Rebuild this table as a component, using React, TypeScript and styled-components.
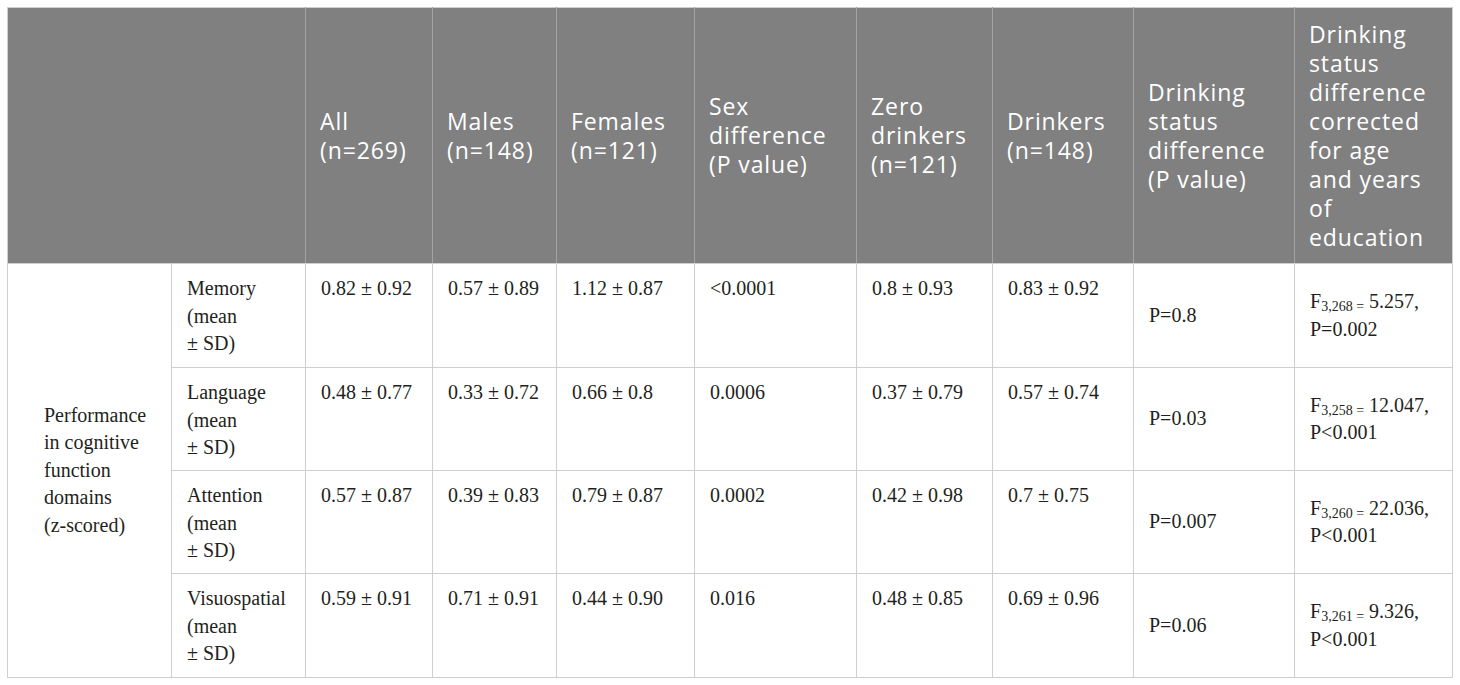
import styled, { createGlobalStyle } from "styled-components"

const GlobalStyle = createGlobalStyle`
    body {
        margin: 0;
        background: #ffffff;
    }
`

const Page = styled.div`
    padding: 7px 0 0 7px;
`

const Table = styled.table`
    border-collapse: collapse;
    table-layout: fixed;
    width: 1446px;
    border: 1px solid #cfcfcf;
`

const HeadRow = styled.tr`
    height: 256px;
    background: #808080;
`

const HeadCell = styled.th`
    font-family: "Open Sans", "DejaVu Sans", sans-serif;
    font-weight: 400;
    font-size: 23px;
    letter-spacing: 0.9px;
    line-height: 29px;
    color: #ffffff;
    text-align: left;
    vertical-align: middle;
    padding: 0 12px 0 14px;
    border-left: 1px solid #a3a3a3;
    border-bottom: 1px solid #cfcfcf;
    &:first-child {
        border-left: none;
    }
`

const BodyRow = styled.tr<{ $h: number }>`
    height: ${p => p.$h}px;
`

const Cell = styled.td<{ $middle?: boolean; $indent?: number }>`
    font-family: "Liberation Serif", "Times New Roman", serif;
    font-size: 20px;
    line-height: 27.5px;
    color: #231f20;
    text-align: left;
    vertical-align: ${p => (p.$middle ? "middle" : "top")};
    padding: ${p => (p.$middle ? "0" : "11px")} 14px 0 ${p => p.$indent ?? 15}px;
    border: 1px solid #cfcfcf;
`

const Sub = styled.sub`
    font-size: 14px;
    vertical-align: -3px;
    line-height: 0;
`

const widths = [164, 134, 127, 124, 138, 162, 136, 141, 161, 158]

const rows = [
    {
        name: "Memory",
        vals: ["0.82 ± 0.92", "0.57 ± 0.89", "1.12 ± 0.87", "<0.0001", "0.8 ± 0.93", "0.83 ± 0.92"],
        p: "P=0.8",
        f: ["3,268", "5.257", "P=0.002"],
        h: 104,
    },
    {
        name: "Language",
        vals: ["0.48 ± 0.77", "0.33 ± 0.72", "0.66 ± 0.8", "0.0006", "0.37 ± 0.79", "0.57 ± 0.74"],
        p: "P=0.03",
        f: ["3,258", "12.047", "P<0.001"],
        h: 103,
    },
    {
        name: "Attention",
        vals: ["0.57 ± 0.87", "0.39 ± 0.83", "0.79 ± 0.87", "0.0002", "0.42 ± 0.98", "0.7 ± 0.75"],
        p: "P=0.007",
        f: ["3,260", "22.036", "P<0.001"],
        h: 103,
    },
    {
        name: "Visuospatial",
        vals: ["0.59 ± 0.91", "0.71 ± 0.91", "0.44 ± 0.90", "0.016", "0.48 ± 0.85", "0.69 ± 0.96"],
        p: "P=0.06",
        f: ["3,261", "9.326", "P<0.001"],
        h: 104,
    },
]

export default function App() {
    return (
        <Page>
            <GlobalStyle />
            <Table>
                <colgroup>
                    {widths.map((w, i) => <col key={i} style={{ width: w }} />)}
                </colgroup>
                <thead>
                    <HeadRow>
                        <HeadCell colSpan={2}></HeadCell>
                        <HeadCell>All<br />(n=269)</HeadCell>
                        <HeadCell>Males<br />(n=148)</HeadCell>
                        <HeadCell>Females<br />(n=121)</HeadCell>
                        <HeadCell>Sex<br />difference<br />(P value)</HeadCell>
                        <HeadCell>Zero<br />drinkers<br />(n=121)</HeadCell>
                        <HeadCell>Drinkers<br />(n=148)</HeadCell>
                        <HeadCell>Drinking<br />status<br />difference<br />(P value)</HeadCell>
                        <HeadCell>Drinking<br />status<br />difference<br />corrected<br />for age<br />and years<br />of<br />education</HeadCell>
                    </HeadRow>
                </thead>
                <tbody>
                    {rows.map((r, i) => (
                        <BodyRow key={r.name} $h={r.h}>
                            {i === 0 && (
                                <Cell rowSpan={4} $middle $indent={36}>
                                    Performance<br />in cognitive<br />function<br />domains<br />(z-scored)
                                </Cell>
                            )}
                            <Cell>{r.name}<br />(mean<br />± SD)</Cell>
                            {r.vals.map((v, j) => <Cell key={j}>{v}</Cell>)}
                            <Cell $middle>{r.p}</Cell>
                            <Cell $middle>
                                F<Sub>{r.f[0]} =</Sub> {r.f[1]},<br />{r.f[2]}
                            </Cell>
                        </BodyRow>
                    ))}
                </tbody>
            </Table>
        </Page>
    )
}
